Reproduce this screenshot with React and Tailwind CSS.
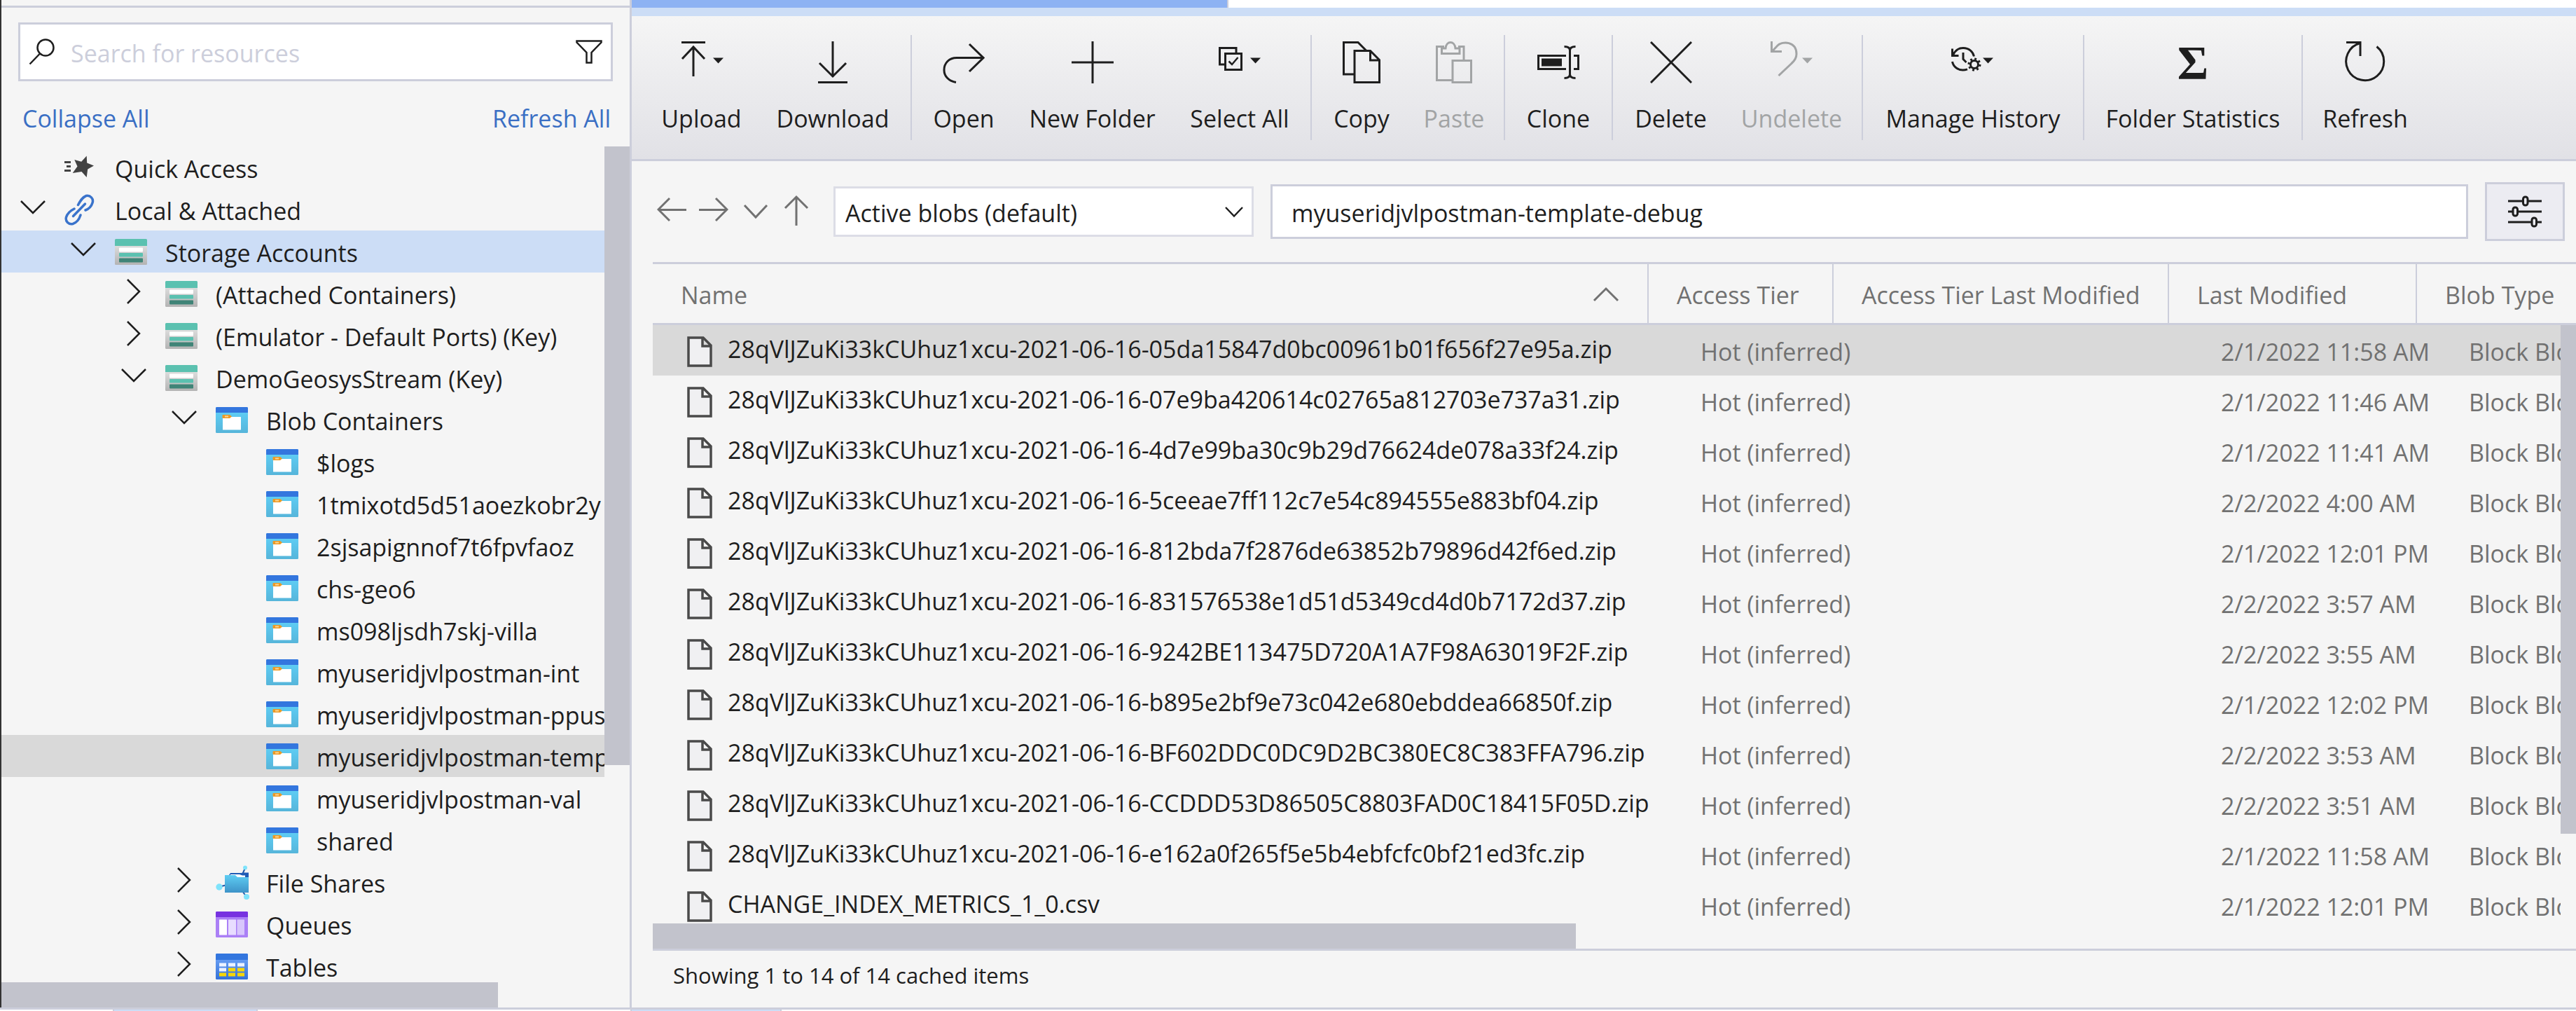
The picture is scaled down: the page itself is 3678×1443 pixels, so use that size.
const FONT = "font-['Open_Sans','Segoe_UI',sans-serif]";

/* ---------- toolbar icons ---------- */

function ToolIcon({ width, children }) {
  return (
    <svg
      width={width}
      height="60"
      viewBox={`0 0 ${width} 60`}
      fill="none"
      stroke="currentColor"
      strokeWidth="3"
      aria-hidden="true"
    >
      {children}
    </svg>
  );
}

const Caret = ({ x }) => (
  <path d={`M${x} 23.5h15l-7.5 8z`} fill="currentColor" stroke="none" />
);

const UploadIcon = () => (
  <ToolIcon width={64}>
    <path d="M3 1.5H37M20 8V50M4 25L20 8L36 25" />
    <Caret x={48} />
  </ToolIcon>
);

const DownloadIcon = () => (
  <ToolIcon width={60}>
    <path d="M30 0V51M11 31L30 50L49 31M9 58.5H51" />
  </ToolIcon>
);

const OpenIcon = () => (
  <ToolIcon width={60}>
    <path d="M38 4L58 23.5L38 43M58 23.5H20C9 23.5 2 31 2 41C2 50 9 57 19 58.5" />
  </ToolIcon>
);

const PlusIcon = () => (
  <ToolIcon width={60}>
    <path d="M30 0V60M0 30H60" />
  </ToolIcon>
);

const SelectAllIcon = () => (
  <ToolIcon width={62}>
    <path d="M9 33H2.5V9.5H26V16" />
    <path d="M10.5 17.5h23v23h-23z" />
    <path d="M15.5 28.5L20 33L28.5 23" strokeWidth="2.5" />
    <Caret x={46} />
  </ToolIcon>
);

const CopyIcon = () => (
  <ToolIcon width={54}>
    <path d="M16 47H1.5V1.5H22L34 13.5" />
    <path d="M17 13.5H39.5L52.5 26.5V58.5H17zM39.5 13.5V27H52.5" />
  </ToolIcon>
);

const PasteIcon = () => (
  <ToolIcon width={52}>
    <path d="M23 55.5H1.5V7.5H12M32 7.5H40V26" />
    <path d="M8.5 17.5V10H14C14.5 4 18 1.5 21 1.5C24 1.5 27.5 4 28 10H34V17.5z" />
    <path d="M24 27.5H50.5V58.5H24z" />
  </ToolIcon>
);

const CloneIcon = () => (
  <ToolIcon width={60}>
    <path d="M41 20.5H1.5V39.5H41M52 20.5H58.5V39.5H52" />
    <path d="M6 24.5h29v11h-29z" fill="currentColor" stroke="none" />
    <path d="M46.5 11V49M38.5 7.5C43 7.5 46.5 9 46.5 13C46.5 9 50 7.5 54.5 7.5M38.5 52.5C43 52.5 46.5 51 46.5 47C46.5 51 50 52.5 54.5 52.5" />
  </ToolIcon>
);

const DeleteIcon = () => (
  <ToolIcon width={60}>
    <path d="M1 1L59 59M59 1L1 59" />
  </ToolIcon>
);

const UndeleteIcon = () => (
  <ToolIcon width={62}>
    <path d="M2.5 0V14.5H17" />
    <path d="M3 14.5L11 6C18 -1 38 0 38 18C38 24 35 28 31 31.5L12.5 49" />
    <Caret x={46} />
  </ToolIcon>
);

const HistoryIcon = () => (
  <ToolIcon width={64}>
    <path d="M2.5 10.5V20.5H11.5" />
    <path d="M3.5 19.5C6.5 13 12 9.5 18 9.5C26 9.5 32 14.5 33.5 21.5" />
    <path d="M2.5 29C4 36.5 10.5 41 17.5 41C20 41 22 40.5 24 39.8" />
    <path d="M18 16V25.5L22.5 30" />
    <circle cx="34" cy="33" r="5.5" />
    <circle cx="34" cy="33" r="8" strokeDasharray="2.8 3.48" strokeWidth="3" />
    <Caret x={46} />
  </ToolIcon>
);

const SigmaIcon = () => (
  <span className="font-['Liberation_Serif',serif] text-[68px] leading-[60px] font-bold" aria-hidden="true">
    Σ
  </span>
);

const RefreshIcon = () => (
  <ToolIcon width={58}>
    <path d="M2 1.5H22V21" />
    <path d="M22 2.5A27 27 0 1 0 45.5 7.5" />
  </ToolIcon>
);

/* ---------- tree icons ---------- */

function StorageIcon() {
  return (
    <svg width="46" height="37" viewBox="0 0 46 37" aria-hidden="true">
      <defs>
        <linearGradient id="storage-body" x1="0" y1="0" x2="0" y2="1">
          <stop offset="0" stopColor="#ebebeb" />
          <stop offset="1" stopColor="#b3b3b3" />
        </linearGradient>
      </defs>
      <rect width="46" height="37" rx="1.5" fill="url(#storage-body)" />
      <path d="M1.5 0h43a1.5 1.5 0 0 1 1.5 1.5V10H0V1.5A1.5 1.5 0 0 1 1.5 0z" fill="#5bc1b0" />
      <rect x="6" y="12.5" width="34" height="6" rx="1" fill="#fff" />
      <rect x="6" y="20" width="34" height="5.5" rx="1" fill="#5bc1b0" />
      <rect x="6" y="27.5" width="34" height="6" rx="1" fill="#3f8477" />
    </svg>
  );
}

function ContainerIcon() {
  return (
    <svg width="46" height="37" viewBox="0 0 46 37" aria-hidden="true">
      <defs>
        <linearGradient id="container-body" x1="0" y1="0" x2="0" y2="1">
          <stop offset="0" stopColor="#60d2fa" />
          <stop offset="1" stopColor="#56b5da" />
        </linearGradient>
      </defs>
      <rect width="46" height="37" rx="1.5" fill="url(#container-body)" />
      <path d="M1.5 0h43a1.5 1.5 0 0 1 1.5 1.5V8H0V1.5A1.5 1.5 0 0 1 1.5 0z" fill="#3376de" />
      <rect x="10" y="14" width="26" height="18.5" rx="0.5" fill="#fff" />
      <path d="M10.5 11H20l3 2.5L20 16h-9.5a1 1 0 0 1-1-1v-3a1 1 0 0 1 1-1z" fill="#ec9a26" />
      <rect x="13" y="12.5" width="5" height="2" fill="#fbd38f" />
    </svg>
  );
}

function FileShareIcon() {
  return (
    <svg width="48" height="50" viewBox="0 0 48 50" aria-hidden="true">
      <defs>
        <linearGradient id="share-body" x1="0" y1="0" x2="0" y2="1">
          <stop offset="0" stopColor="#5ecdf3" />
          <stop offset="1" stopColor="#3e93c8" />
        </linearGradient>
      </defs>
      <path d="M42 5L38 14M4 32L16 29M38 38L44 46" stroke="#1f57a8" strokeWidth="2" />
      <path d="M19 15L21 12H36L40 11.5H47V22H19z" fill="#1f5bb5" />
      <path d="M21 14H34L38 15.5H42V20H21z" fill="#fff" />
      <path d="M13 15H28L31 18H47V40H13z" fill="url(#share-body)" />
      <circle cx="42" cy="4.5" r="3" fill="#7fe3fb" />
      <circle cx="5" cy="32" r="4.7" fill="#7fe3fb" />
      <circle cx="44" cy="46" r="4" fill="#7fe3fb" />
    </svg>
  );
}

function QueueIcon() {
  return (
    <svg width="46" height="37" viewBox="0 0 46 37" aria-hidden="true">
      <rect width="46" height="37" rx="1.5" fill="#ab80f6" />
      <path d="M1.5 0h43a1.5 1.5 0 0 1 1.5 1.5V8H0V1.5A1.5 1.5 0 0 1 1.5 0z" fill="#7732e0" />
      <rect x="5" y="11.5" width="11" height="22" rx="0.5" fill="#fff" />
      <rect x="18" y="11.5" width="11" height="22" rx="0.5" fill="#e8ddff" />
      <rect x="30.5" y="11.5" width="10.5" height="22" rx="0.5" fill="#d8c6fc" />
    </svg>
  );
}

function TableIcon() {
  const cells = [
    ["#ebf2ff", "#ebf2ff", "#ebf2ff"],
    ["#ebf2ff", "#f6d60a", "#f6d60a"],
    ["#f6d60a", "#f6d60a", "#f6d60a"],
  ];
  return (
    <svg width="46" height="37" viewBox="0 0 46 37" aria-hidden="true">
      <defs>
        <linearGradient id="table-body" x1="0" y1="0" x2="0" y2="1">
          <stop offset="0" stopColor="#74a9fa" />
          <stop offset="1" stopColor="#3471d8" />
        </linearGradient>
      </defs>
      <rect width="46" height="37" rx="1.5" fill="url(#table-body)" />
      <path d="M1.5 0h43a1.5 1.5 0 0 1 1.5 1.5V9H0V1.5A1.5 1.5 0 0 1 1.5 0z" fill="#3376de" />
      {cells.map((row, r) =>
        row.map((color, c) => (
          <rect key={`${r}-${c}`} x={5 + c * 13} y={13.5 + r * 7} width="10" height="5" fill={color} />
        ))
      )}
    </svg>
  );
}

function QuickAccessIcon() {
  return (
    <svg width="42" height="34" viewBox="0 0 42 34" fill="#424242" aria-hidden="true">
      <path d="M0 8h9v3H0zM3 14h6v3H3zM0 20h9v3H0z" />
      <path d="M31.7 0.5L32.2 10.5L42 14.5L33.2 19.5L31.7 31L24.5 23L11.7 25L18.5 15.5L14.3 6L24.2 8.8z" />
    </svg>
  );
}

function LinkIcon() {
  return (
    <svg width="43" height="45" viewBox="0 0 43 45" fill="none" stroke="#3a73cb" strokeWidth="3.5" strokeLinecap="round" aria-hidden="true">
      <path d="M19.5 15.5C22.5 10 25.5 4.5 31 2.5C37 1.5 42 6.5 40 12.5C38.5 17.5 34 21.5 30 23" />
      <path d="M14 21C9 23.5 4 28 2.5 33C1 39 6 44 12 42.5C17 41 21 36 23 30" />
      <path d="M12.5 31.5L29.5 14" />
    </svg>
  );
}

const ChevronDown = () => (
  <svg width="38" height="24" viewBox="0 0 38 24" fill="none" stroke="currentColor" strokeWidth="2.5" aria-hidden="true">
    <path d="M2 3L19 20L36 3" />
  </svg>
);

const ChevronRight = () => (
  <svg width="24" height="38" viewBox="0 0 24 38" fill="none" stroke="currentColor" strokeWidth="2.5" aria-hidden="true">
    <path d="M3 2L20 19L3 36" />
  </svg>
);

/* ---------- data ---------- */

const TOOL_GROUPS = [
  [
    { label: "Upload", width: "w-[163px]", icon: <UploadIcon /> },
    { label: "Download", width: "w-[212px]", icon: <DownloadIcon /> },
  ],
  [
    { label: "Open", width: "w-[138px]", icon: <OpenIcon /> },
    { label: "New Folder", width: "w-[229px]", icon: <PlusIcon /> },
    { label: "Select All", width: "w-[192px]", icon: <SelectAllIcon /> },
  ],
  [
    { label: "Copy", width: "w-[132px]", icon: <CopyIcon /> },
    { label: "Paste", width: "w-[132px]", icon: <PasteIcon />, disabled: true },
  ],
  [{ label: "Clone", width: "w-[142px]", icon: <CloneIcon /> }],
  [
    { label: "Delete", width: "w-[155px]", icon: <DeleteIcon /> },
    { label: "Undelete", width: "w-[190px]", icon: <UndeleteIcon />, disabled: true },
  ],
  [{ label: "Manage History", width: "w-[304px]", icon: <HistoryIcon /> }],
  [{ label: "Folder Statistics", width: "w-[300px]", icon: <SigmaIcon /> }],
  [{ label: "Refresh", width: "w-[168px]", icon: <RefreshIcon /> }],
];

const TREE = [
  { level: 0, label: "Quick Access", icon: <QuickAccessIcon /> },
  { level: 0, label: "Local & Attached", icon: <LinkIcon />, open: true },
  { level: 1, label: "Storage Accounts", icon: <StorageIcon />, open: true, tone: "bg-[#ccddf6]" },
  { level: 2, label: "(Attached Containers)", icon: <StorageIcon />, open: false },
  { level: 2, label: "(Emulator - Default Ports) (Key)", icon: <StorageIcon />, open: false },
  { level: 2, label: "DemoGeosysStream (Key)", icon: <StorageIcon />, open: true },
  { level: 3, label: "Blob Containers", icon: <ContainerIcon />, open: true },
  { level: 4, label: "$logs", icon: <ContainerIcon /> },
  { level: 4, label: "1tmixotd5d51aoezkobr2y", icon: <ContainerIcon /> },
  { level: 4, label: "2sjsapignnof7t6fpvfaoz", icon: <ContainerIcon /> },
  { level: 4, label: "chs-geo6", icon: <ContainerIcon /> },
  { level: 4, label: "ms098ljsdh7skj-villa", icon: <ContainerIcon /> },
  { level: 4, label: "myuseridjvlpostman-int", icon: <ContainerIcon /> },
  { level: 4, label: "myuseridjvlpostman-ppush", icon: <ContainerIcon /> },
  { level: 4, label: "myuseridjvlpostman-template-debug", icon: <ContainerIcon />, tone: "bg-[#d9d9d9]" },
  { level: 4, label: "myuseridjvlpostman-val", icon: <ContainerIcon /> },
  { level: 4, label: "shared", icon: <ContainerIcon /> },
  { level: 3, label: "File Shares", icon: <FileShareIcon />, open: false },
  { level: 3, label: "Queues", icon: <QueueIcon />, open: false },
  { level: 3, label: "Tables", icon: <TableIcon />, open: false },
];

const INDENT = ["pl-0", "pl-[72px]", "pl-[144px]", "pl-[216px]", "pl-[288px]"];

const PREFIX = "28qVlJZuKi33kCUhuz1xcu-2021-06-16-";

const BLOBS = [
  [`${PREFIX}05da15847d0bc00961b01f656f27e95a.zip`, "2/1/2022 11:58 AM"],
  [`${PREFIX}07e9ba420614c02765a812703e737a31.zip`, "2/1/2022 11:46 AM"],
  [`${PREFIX}4d7e99ba30c9b29d76624de078a33f24.zip`, "2/1/2022 11:41 AM"],
  [`${PREFIX}5ceeae7ff112c7e54c894555e883bf04.zip`, "2/2/2022 4:00 AM"],
  [`${PREFIX}812bda7f2876de63852b79896d42f6ed.zip`, "2/1/2022 12:01 PM"],
  [`${PREFIX}831576538e1d51d5349cd4d0b7172d37.zip`, "2/2/2022 3:57 AM"],
  [`${PREFIX}9242BE113475D720A1A7F98A63019F2F.zip`, "2/2/2022 3:55 AM"],
  [`${PREFIX}b895e2bf9e73c042e680ebddea66850f.zip`, "2/1/2022 12:02 PM"],
  [`${PREFIX}BF602DDC0DC9D2BC380EC8C383FFA796.zip`, "2/2/2022 3:53 AM"],
  [`${PREFIX}CCDDD53D86505C8803FAD0C18415F05D.zip`, "2/2/2022 3:51 AM"],
  [`${PREFIX}e162a0f265f5e5b4ebfcfc0bf21ed3fc.zip`, "2/1/2022 11:58 AM"],
  ["CHANGE_INDEX_METRICS_1_0.csv", "2/1/2022 12:01 PM"],
];

/* ---------- sidebar ---------- */

function TreeRow({ level, label, icon, open, tone = "" }) {
  return (
    <li
      role="treeitem"
      aria-level={level + 1}
      aria-expanded={open}
      className={`flex h-[60px] items-center whitespace-nowrap ${INDENT[level]} ${tone}`}
    >
      <span className="flex w-[90px] shrink-0 justify-center pb-[6px]">
        {open !== undefined && (
          <button type="button" aria-label={`${open ? "Collapse" : "Expand"} ${label}`}>
            {open ? <ChevronDown /> : <ChevronRight />}
          </button>
        )}
      </span>
      <span className="w-[72px] shrink-0">{icon}</span>
      <span className="pt-1">{label}</span>
    </li>
  );
}

function Sidebar() {
  return (
    <aside className="flex w-[902px] shrink-0 flex-col border-r-[3px] border-l-2 border-r-[#cccedb] border-l-[#333333]">
      <div className="h-[11px] shrink-0 border-b-[3px] border-[#cccedb]" />

      <div className="mx-6 mt-[21px] flex h-[84px] shrink-0 items-center border-[3px] border-[#cccedb] bg-white px-3">
        <svg width="38" height="38" viewBox="0 0 38 38" fill="none" stroke="#1e1e1e" strokeWidth="2.5" aria-hidden="true">
          <circle cx="24" cy="13" r="11.5" />
          <path d="M16 21.5L1.5 36.5" />
        </svg>
        <input
          type="search"
          aria-label="Search for resources"
          placeholder="Search for resources"
          className="ml-[22px] min-w-0 flex-1 bg-transparent pt-1 outline-none placeholder:text-[#cccedb]"
        />
        <button type="button" aria-label="Filter">
          <svg width="38" height="34" viewBox="0 0 38 34" fill="none" stroke="#1e1e1e" strokeWidth="2.5" aria-hidden="true">
            <path d="M1.5 1.5H36.5V3.5L22.5 18V32.5H15.5V18L1.5 3.5z" />
          </svg>
        </button>
      </div>

      <div className="mt-[23px] mb-[10px] flex h-[60px] shrink-0 items-center justify-between pr-[27px] pl-[30px] text-[#3a6fc4]">
        <a href="#collapse">Collapse All</a>
        <a href="#refresh">Refresh All</a>
      </div>

      <div className="flex min-h-0 flex-1">
        <ul role="tree" aria-label="Resources" className="min-w-0 flex-1 overflow-hidden">
          {TREE.map((item) => (
            <TreeRow key={item.label} {...item} />
          ))}
        </ul>
        <div className="w-9 shrink-0">
          <div className="h-[74%] bg-[#c2c3cc]" />
        </div>
      </div>
      <div className="h-9 shrink-0">
        <div className="h-full w-[79%] bg-[#c2c3cc]" />
      </div>
    </aside>
  );
}

/* ---------- main pane ---------- */

function Toolbar() {
  return (
    <div
      role="toolbar"
      aria-label="Blob actions"
      className="flex h-[207px] shrink-0 items-start border-b-[3px] border-[#cccedb] bg-linear-to-b from-[#f5f5f5] to-[#e1e1e6] pt-[27px] pl-[18px]"
    >
      {TOOL_GROUPS.map((group, i) => (
        <div key={group[0].label} className="flex">
          {i > 0 && <div className="mx-[5px] h-[150px] w-[2px] bg-[#cccedb]" />}
          {group.map((tool) => (
            <button
              key={tool.label}
              type="button"
              disabled={tool.disabled}
              className={`flex flex-col items-center whitespace-nowrap pt-[9px] disabled:text-[#a2a4a5] ${tool.width}`}
            >
              <span className="flex h-[60px] items-center">{tool.icon}</span>
              <span className="mt-5 leading-[60px]">{tool.label}</span>
            </button>
          ))}
        </div>
      ))}
    </div>
  );
}

function NavButton({ label, path }) {
  return (
    <button type="button" aria-label={label}>
      <svg width="42" height="48" viewBox="0 0 42 48" fill="none" stroke="#717171" strokeWidth="3" aria-hidden="true">
        <path d={path} />
      </svg>
    </button>
  );
}

function NavBar() {
  return (
    <div className="flex h-36 shrink-0 items-center pr-4 pl-9">
      <div className="flex gap-[18px]">
        <NavButton label="Back" path="M18 5L2 21L18 37M2 21.5H42" />
        <NavButton label="Forward" path="M24 5L40 21L24 37M40 21.5H0" />
        <NavButton label="History" path="M5 15L21 32L37 15" />
        <NavButton label="Up" path="M3 19L19 3L35 19M19 3V44" />
      </div>
      <div className="relative ml-[30px] w-[600px] shrink-0">
        <select
          aria-label="Blob view"
          className="h-[72px] w-full appearance-none border-[3px] border-[#dcdde6] bg-white px-[14px] pt-1 outline-none"
        >
          <option>Active blobs (default)</option>
        </select>
        <svg className="pointer-events-none absolute top-[27px] right-[14px]" width="28" height="20" viewBox="0 0 28 20" fill="none" stroke="#1e1e1e" strokeWidth="2.5" aria-hidden="true">
          <path d="M2 3L14 15.5L26 3" />
        </svg>
      </div>
      <input
        type="text"
        aria-label="Container path"
        defaultValue="myuseridjvlpostman-template-debug"
        className="ml-6 h-[78px] min-w-0 flex-1 border-[3px] border-[#cccedb] bg-white px-[27px] pt-1 outline-none"
      />
      <button
        type="button"
        aria-label="Settings"
        className="ml-6 flex h-[84px] w-[114px] shrink-0 items-center justify-center border-[3px] border-[#cccedb] bg-[#ececf2]"
      >
        <svg width="50" height="46" viewBox="0 0 50 46" fill="#ececf2" stroke="#1e1e1e" strokeWidth="3" aria-hidden="true">
          <path d="M1 8H49M1 23H49M1 38H49" />
          <rect x="22.5" y="2" width="6.5" height="12" rx="3" />
          <rect x="8" y="17" width="6.5" height="12" rx="3" />
          <rect x="35" y="32" width="6.5" height="12" rx="3" />
        </svg>
      </button>
    </div>
  );
}

const FileIcon = () => (
  <svg width="36" height="44" viewBox="0 0 36 44" fill="#f0f0f2" stroke="#4a4a4a" strokeWidth="3.5" aria-hidden="true">
    <path d="M2 2H23L34 13V42H2zM22 2V14H34" />
  </svg>
);

function BlobTable() {
  const th = "h-[87px] border-b-[3px] border-[#cccedb] pt-1 pl-10 text-left font-normal";
  return (
    <div className="relative min-h-0 flex-1 overflow-hidden">
      <table className="w-full table-fixed border-separate border-spacing-0 whitespace-nowrap text-[#717171]">
        <colgroup>
          <col />
          <col className="w-[264px]" />
          <col className="w-[479px]" />
          <col className="w-[354px]" />
          <col className="w-[227px]" />
        </colgroup>
        <thead>
          <tr>
            <th scope="col" aria-sort="ascending" className={`${th} border-r-2`}>
              <div className="flex items-center justify-between pr-10">
                <span>Name</span>
                <svg width="38" height="24" viewBox="0 0 38 24" fill="none" stroke="#717171" strokeWidth="3" aria-hidden="true">
                  <path d="M2 20L19 3L36 20" />
                </svg>
              </div>
            </th>
            <th scope="col" className={`${th} border-r-2`}>Access Tier</th>
            <th scope="col" className={`${th} border-r-2`}>Access Tier Last Modified</th>
            <th scope="col" className={`${th} border-r-2`}>Last Modified</th>
            <th scope="col" className={th}>Blob Type</th>
          </tr>
        </thead>
        <tbody>
          {BLOBS.map(([name, modified], i) => (
            <tr key={name} className={i === 0 ? "bg-[#d9d9d9]" : ""}>
              <td className="h-[72px] pl-[49px] text-[#1e1e1e]">
                <div className="flex items-center gap-[22px]">
                  <span className="shrink-0 pt-1">
                    <FileIcon />
                  </span>
                  <span className="pb-1">{name}</span>
                </div>
              </td>
              <td className="pt-1 pl-[74px]">Hot (inferred)</td>
              <td />
              <td className="pt-1 pl-[74px]">{modified}</td>
              <td className="pt-1 pl-[74px]">Block Blob</td>
            </tr>
          ))}
        </tbody>
      </table>
      <div className="absolute top-[87px] right-0 bottom-0 w-[22px] bg-[#f5f5f5]">
        <div className="h-[85%] bg-[#c2c3cc]" />
      </div>
    </div>
  );
}

export default function App() {
  return (
    <div className={`flex h-screen w-full flex-col overflow-hidden bg-[#f5f5f5] text-[34px] leading-[46px] text-[#1e1e1e] ${FONT}`}>
      <div className="flex min-h-0 flex-1">
        <Sidebar />
        <main className="flex min-w-0 flex-1 flex-col">
          <div className="flex h-[11px] shrink-0 bg-white">
            <div className="w-[852px] border-r-2 border-[#cccedb] bg-[#8db2f3]" />
          </div>
          <div className="h-3 shrink-0 bg-[#ccddf6]" />
          <Toolbar />
          <NavBar />
          <section className="ml-[30px] flex min-h-0 flex-1 flex-col border-t-[3px] border-[#cccedb]">
            <BlobTable />
            <div className="h-9 shrink-0">
              <div className="h-full w-[48%] bg-[#c2c3cc]" />
            </div>
            <footer className="flex h-[84px] shrink-0 items-center border-t-[3px] border-[#cccedb] pb-3 pl-[29px] text-[31px]">
              Showing 1 to 14 of 14 cached items
            </footer>
          </section>
        </main>
      </div>
      <div className="flex h-[5px] shrink-0 border-t-[3px] border-[#cccedb] bg-white">
        <div className="ml-[161px] w-[207px] border-x-2 border-[#cccedb] bg-[#ccddf6]" />
        <div className="ml-[532px] w-[216px] border-x-2 border-[#cccedb] bg-[#ccddf6]" />
      </div>
    </div>
  );
}
